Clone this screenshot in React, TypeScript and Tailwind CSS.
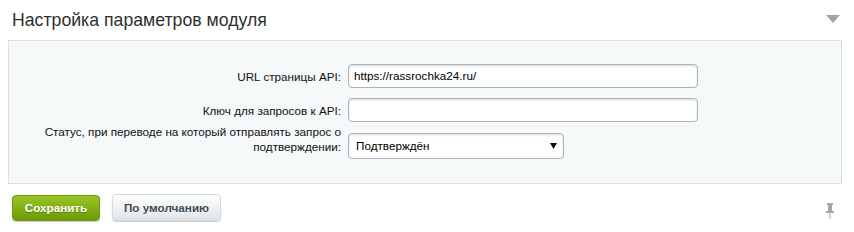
const FONT = "font-['Liberation_Sans',Arial,sans-serif]"

function Label({ children }: { children: React.ReactNode }) {
  return (
    <div className="w-[339px] shrink-0 pr-[7px] text-right text-[11.7px] leading-[15px] text-[#111]">
      {children}
    </div>
  )
}

function TextInput({ value }: { value: string }) {
  return (
    <div className="flex h-[24px] w-[350px] items-center rounded-[4px] border border-[#aeb5ba] bg-white pl-[5px] text-[11.7px] text-black shadow-[inset_0_1px_2px_rgba(160,170,175,0.45)]">
      {value}
    </div>
  )
}

function PinIcon() {
  return (
    <svg width="8" height="16" viewBox="0 0 8 16" className="text-[#a2a8ab]">
      <rect x="1" y="0" width="6" height="2" fill="currentColor" />
      <rect x="2" y="2" width="4" height="6" fill="currentColor" />
      <rect x="0" y="8" width="8" height="2" fill="currentColor" />
      <rect x="3.5" y="10" width="1" height="6" fill="currentColor" />
    </svg>
  )
}

export default function App() {
  return (
    <div className={`w-[854px] h-[232px] bg-white ${FONT}`}>
      {/* Title */}
      <div className="flex h-[40px] items-start justify-between pt-[10px] pl-[12px] pr-[14px]">
        <h1 className="text-[17.7px] leading-[21px] text-[#2f2f2f]">Настройка параметров модуля</h1>
        <svg width="14" height="8" viewBox="0 0 14 8" className="mt-[5px]">
          <path d="M0 0 H14 L7 8 Z" fill="#9ea5aa" />
        </svg>
      </div>

      {/* Settings panel */}
      <div className="ml-[8px] w-[834px] border border-[#d9e1e3] bg-[#f5f9f9] pt-[23px] pb-[24px]">
        <div className="flex items-center">
          <Label>URL страницы API:</Label>
          <TextInput value="https://rassrochka24.ru/" />
        </div>
        <div className="mt-[10px] flex items-center">
          <Label>Ключ для запросов к API:</Label>
          <TextInput value="" />
        </div>
        <div className="mt-[2px] flex items-start">
          <Label>Статус, при переводе на который отправлять запрос о подтверждении:</Label>
          <div className="mt-[9px] flex h-[26px] w-[216px] items-center justify-between rounded-[4px] border border-[#aeb5ba] bg-white pl-[7px] pr-[6px] text-[11.7px] text-black shadow-[inset_0_1px_2px_rgba(160,170,175,0.45)]">
            <span>Подтверждён</span>
            <svg width="7" height="6" viewBox="0 0 7 6">
              <path d="M0 0 H7 L3.5 6 Z" fill="#111" />
            </svg>
          </div>
        </div>
      </div>

      {/* Footer */}
      <div className="mt-[10px] flex items-start justify-between pl-[12px] pr-[20px]">
        <div className="flex items-center gap-[12px]">
          <button className="h-[26px] w-[88px] rounded-[4px] border border-[#6a9606] bg-gradient-to-b from-[#9bc424] to-[#6c9a04] text-[11.7px] font-bold text-white [text-shadow:0_1px_rgba(0,0,0,0.25)] shadow-[0_1px_1px_rgba(0,0,0,0.2)]">
            Сохранить
          </button>
          <button className="h-[27px] w-[109px] rounded-[4px] border border-[#d3d9dc] bg-gradient-to-b from-[#ffffff] to-[#dfe5e7] text-[11.7px] font-bold text-[#3f4b54] shadow-[0_1px_1px_rgba(0,0,0,0.2),inset_0_1px_0_#fff] [text-shadow:0_1px_rgba(255,255,255,0.7)]">
            По умолчанию
          </button>
        </div>
        <div className="mt-[9px]">
          <PinIcon />
        </div>
      </div>
    </div>
  )
}
